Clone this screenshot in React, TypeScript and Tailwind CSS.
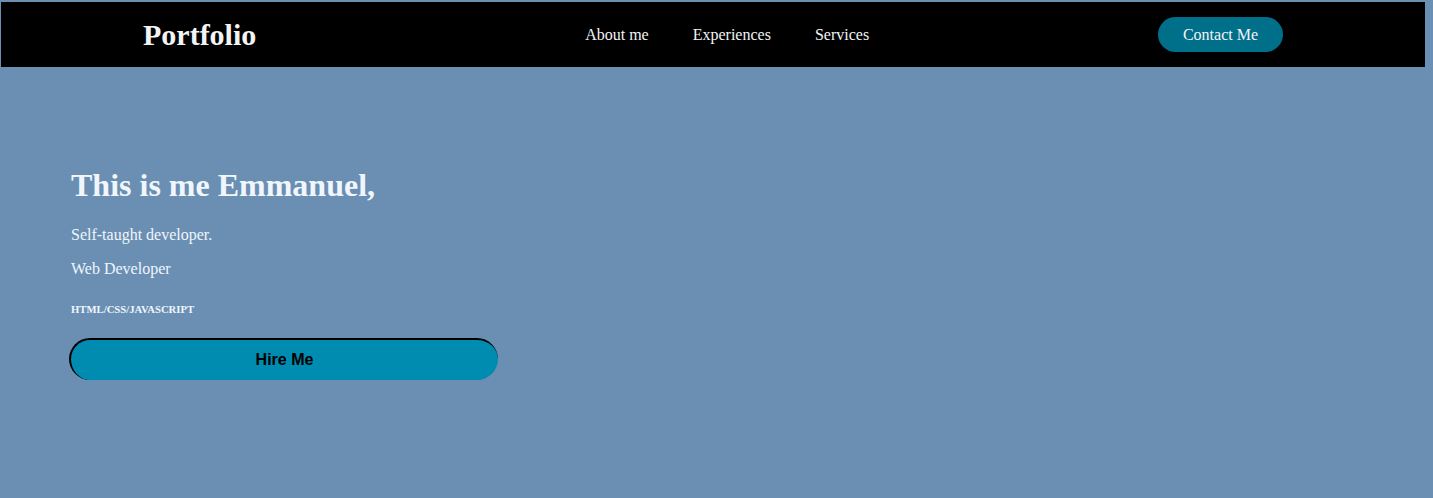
import React from 'react';

const links = ['About me', 'Experiences', 'Services'];

const App: React.FC = () => {
  return (
    <div
      className="min-h-[498px] bg-[#6a8fb3] pt-[2px] pl-[1px]"
      style={{ fontFamily: '"Liberation Serif", "Times New Roman", serif' }}
    >
      <nav className="flex h-[65px] w-[1424px] items-center justify-between bg-black px-[142px]">
        <h2 className="text-[30px] font-bold leading-[34px] text-[#f2f4f6]">Portfolio</h2>
        <ul className="flex items-center gap-[44px] pl-[40px]">
          {links.map((label) => (
            <li key={label}>
              <a href="#" className="text-[16px] leading-[18px] text-[#f2f4f6]">
                {label}
              </a>
            </li>
          ))}
        </ul>
        <button className="h-[35px] w-[125px] rounded-full bg-[#006f8a] text-[16px] text-[#f2f4f6]">
          Contact Me
        </button>
      </nav>

      <section className="pl-[70px] pt-[100px] text-[#f0f6fc]">
        <h1 className="text-[32px] font-bold leading-[37px]">This is me Emmanuel,</h1>
        <p className="mt-[22px] text-[16px] leading-[18px]">Self-taught developer.</p>
        <p className="mt-[16px] text-[16px] leading-[18px]">Web Developer</p>
        <h6 className="mt-[25px] text-[10.7px] font-bold leading-[12px]">HTML/CSS/JAVASCRIPT</h6>
        <button
          className="-ml-[2px] mt-[23px] flex h-[42px] w-[429px] items-center justify-center rounded-full border-l-2 border-t-2 border-black bg-[#008bb0] text-[16px] font-bold text-black"
          style={{ fontFamily: '"Liberation Sans", Arial, sans-serif' }}
        >
          Hire Me
        </button>
      </section>
    </div>
  );
};

export default App;
